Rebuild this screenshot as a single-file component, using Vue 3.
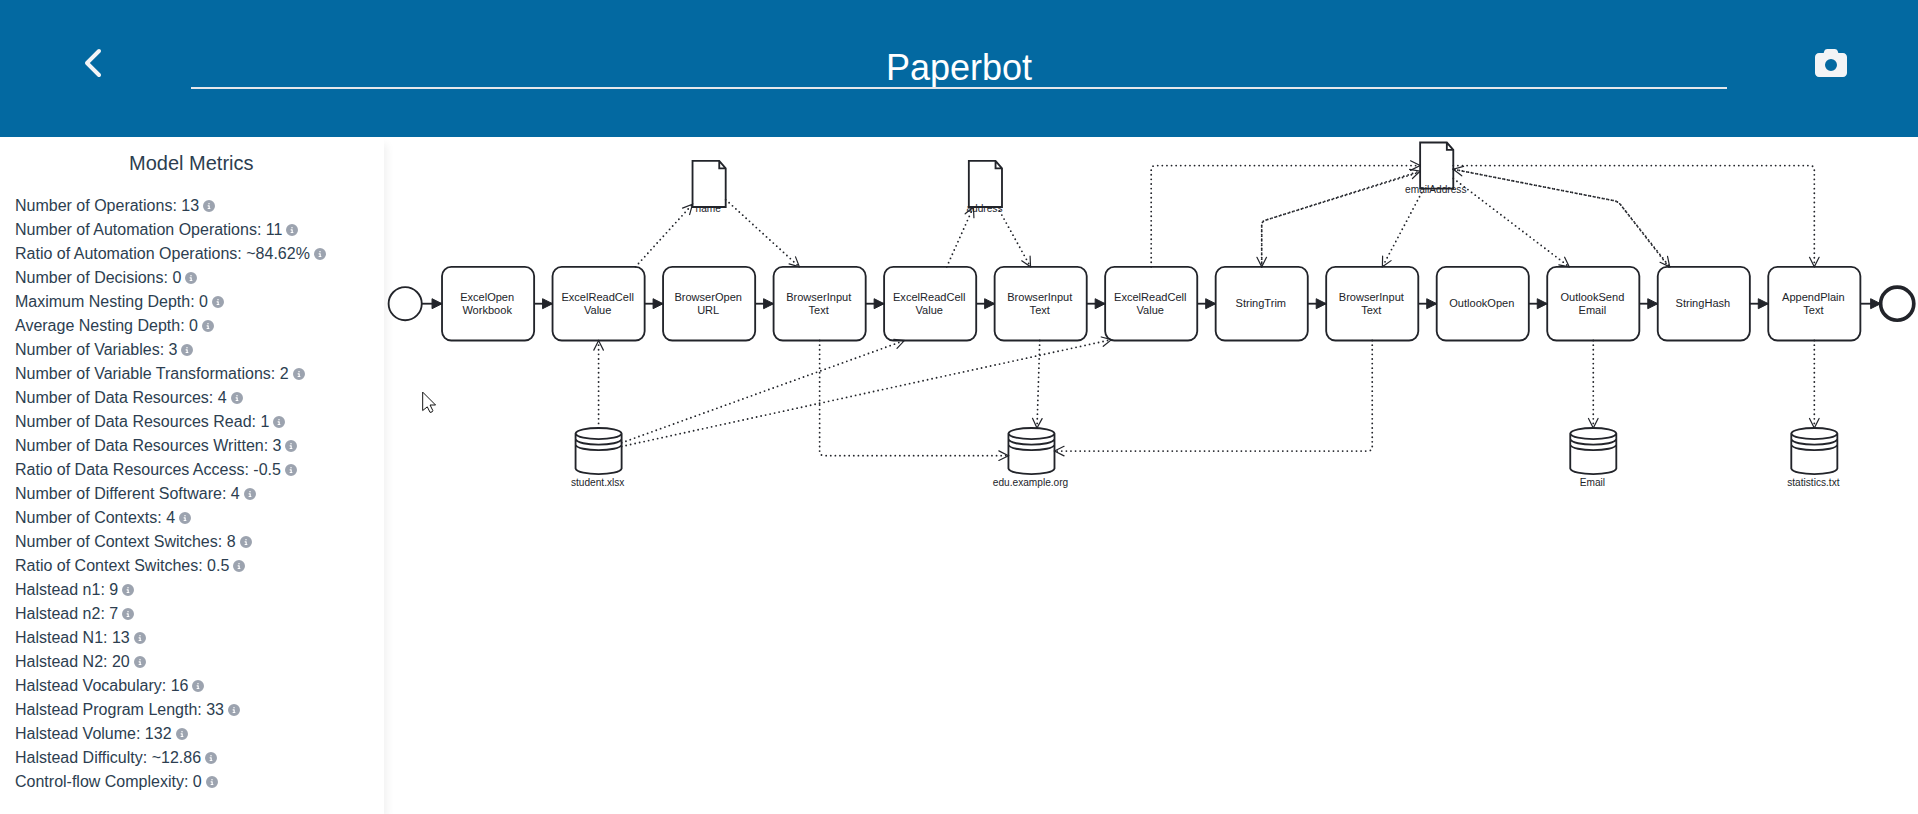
<script setup>
import { ref } from 'vue'

const modelName = ref('Paperbot')

const metrics = [
  ['Number of Operations', '13'],
  ['Number of Automation Operations', '11'],
  ['Ratio of Automation Operations', '~84.62%'],
  ['Number of Decisions', '0'],
  ['Maximum Nesting Depth', '0'],
  ['Average Nesting Depth', '0'],
  ['Number of Variables', '3'],
  ['Number of Variable Transformations', '2'],
  ['Number of Data Resources', '4'],
  ['Number of Data Resources Read', '1'],
  ['Number of Data Resources Written', '3'],
  ['Ratio of Data Resources Access', '-0.5'],
  ['Number of Different Software', '4'],
  ['Number of Contexts', '4'],
  ['Number of Context Switches', '8'],
  ['Ratio of Context Switches', '0.5'],
  ['Halstead n1', '9'],
  ['Halstead n2', '7'],
  ['Halstead N1', '13'],
  ['Halstead N2', '20'],
  ['Halstead Vocabulary', '16'],
  ['Halstead Program Length', '33'],
  ['Halstead Volume', '132'],
  ['Halstead Difficulty', '~12.86'],
  ['Control-flow Complexity', '0'],
]

const tasks = [
  ['ExcelOpen', 'Workbook'],
  ['ExcelReadCell', 'Value'],
  ['BrowserOpen', 'URL'],
  ['BrowserInput', 'Text'],
  ['ExcelReadCell', 'Value'],
  ['BrowserInput', 'Text'],
  ['ExcelReadCell', 'Value'],
  ['StringTrim'],
  ['BrowserInput', 'Text'],
  ['OutlookOpen'],
  ['OutlookSend', 'Email'],
  ['StringHash'],
  ['AppendPlain', 'Text'],
].map((lines, i) => ({ lines, x: 63 + i * 120 }))

const flows = [
  'M41 181H63',
  ...tasks.map((t) => `M${t.x + 100} 181h${t.x === 1503 ? 22 : 20}`),
]

const variables = [
  { name: 'name', x: 335, y: 26 },
  { name: 'address', x: 635, y: 26 },
  { name: 'emailAddress', x: 1125, y: 6 },
]

const stores = [
  { name: 'student.xlsx', x: 208 },
  { name: 'edu.example.org', x: 678 },
  { name: 'Email', x: 1288 },
  { name: 'statistics.txt', x: 1528 },
]

const associations = [
  'M273 141L335 73',
  'M371 68L451 141',
  'M611 141L640 76',
  'M666 76L702 141',
  'M233 316V221',
  'M258 332L565 221',
  'M258 336L790 220',
  'M473 221V341Q473 346 478 346H678',
  'M712 221L709 316',
  'M1073 221V336Q1073 341 1068 341H728',
  'M833 141V36Q833 31 838 31H1125',
  'M953 141V96Q953 91 958 90L1125 37',
  'M1125 38L958 90Q953 91 953 96V141',
  'M1129 56L1084 141',
  'M1161 45L1287 141',
  'M1161 35L1335 69Q1340 70 1343 74L1396 141',
  'M1395 141L1343 74Q1340 70 1335 69L1161 35',
  'M1161 31H1548Q1553 31 1553 36V141',
  'M1313 221V316',
  'M1553 221V316',
]
</script>

<template>
  <div class="page">
    <header class="top">
      <div class="side back">
        <button type="button" aria-label="Back">
          <svg width="16" height="32" viewBox="0 0 256 512"><path d="M9.4 233.4c-12.5 12.5-12.5 32.8 0 45.3l192 192c12.5 12.5 32.8 12.5 45.3 0s12.5-32.8 0-45.3L77.3 256 246.6 86.6c12.5-12.5 12.5-32.8 0-45.3s-32.8-12.5-45.3 0l-192 192z" /></svg>
        </button>
      </div>
      <input v-model="modelName" class="title" type="text" aria-label="Model name" />
      <div class="side shot">
        <button type="button" aria-label="Save image">
          <svg width="32" height="32" viewBox="0 0 512 512"><path d="M149.1 64.8L138.7 96H64C28.7 96 0 124.7 0 160V416c0 35.3 28.7 64 64 64H448c35.3 0 64-28.7 64-64V160c0-35.3-28.7-64-64-64H373.3L362.9 64.8C356.4 45.2 338.1 32 317.4 32H194.6c-20.7 0-39 13.2-45.5 32.8zM256 192a96 96 0 1 1 0 192 96 96 0 1 1 0-192z" /></svg>
        </button>
      </div>
    </header>

    <main class="body">
      <aside class="metrics">
        <h2>Model Metrics</h2>
        <ul>
          <li v-for="[label, value] in metrics" :key="label">
            <span>{{ label }}: {{ value }}</span>
            <svg class="info" width="12" height="12" viewBox="0 0 512 512"><path d="M256 512A256 256 0 1 0 256 0a256 256 0 1 0 0 512zM216 336h24V272H216c-13.3 0-24-10.7-24-24s10.7-24 24-24h48c13.3 0 24 10.7 24 24v88h8c13.3 0 24 10.7 24 24s-10.7 24-24 24H216c-13.3 0-24-10.7-24-24s10.7-24 24-24zm40-208a32 32 0 1 1 0 64 32 32 0 1 1 0-64z" /></svg>
          </li>
        </ul>
      </aside>

      <section class="canvas">
        <svg class="diagram" viewBox="0 0 1666 700" preserveAspectRatio="xMinYMin meet">
          <defs>
            <marker id="flow-end" markerUnits="userSpaceOnUse" viewBox="0 0 12 12" markerWidth="13" markerHeight="13" refX="11" refY="6" orient="auto">
              <path d="M1 1L11 6L1 11Z" class="head" />
            </marker>
            <marker id="assoc-end" markerUnits="userSpaceOnUse" viewBox="0 0 10 10" markerWidth="13" markerHeight="13" refX="9" refY="5" orient="auto">
              <path d="M1 1L9 5L1 9" class="open-head" />
            </marker>
          </defs>

          <circle class="shape" cx="23" cy="181" r="18" />
          <circle class="shape end" cx="1643" cy="181" r="18" />

          <g v-for="t in tasks" :key="t.x">
            <rect class="shape" :x="t.x" y="141" width="100" height="80" rx="10" />
            <text
              v-for="(line, n) in t.lines"
              :key="line"
              class="task-label"
              :x="t.x + 49"
              :y="(t.lines.length === 1 ? 185 : 178) + n * 14"
            >{{ line }}</text>
          </g>

          <path v-for="d in flows" :key="d" :d="d" class="flow" marker-end="url(#flow-end)" />

          <g v-for="v in variables" :key="v.name">
            <path class="shape" :d="`M${v.x} ${v.y}h29l7 8v42h-36zm29 0v8h7`" />
            <text class="label" :x="v.x + 17" :y="v.y + 55">{{ v.name }}</text>
          </g>

          <g v-for="s in stores" :key="s.name">
            <path
              class="shape"
              :d="`M${s.x} 322v38c2 8 48 8 50 0v-38c-2-8-48-8-50 0c2 8 48 8 50 0m-50 6c2 8 48 8 50 0m-50 6c2 8 48 8 50 0`"
            />
            <text class="label" :x="s.x + 24" y="379">{{ s.name }}</text>
          </g>

          <path v-for="d in associations" :key="d" :d="d" class="assoc" marker-end="url(#assoc-end)" />

          <path class="pointer" d="M42 277V297L47 293L50 299Q53 299 53 297L50 291H56Z" />
        </svg>
      </section>
    </main>
  </div>
</template>

<style>
body {
  margin: 0;
  background: #fff;
}
</style>

<style scoped>
.page {
  display: flex;
  flex-direction: column;
  min-height: 100vh;
  font-family: "Liberation Sans", Arial, sans-serif;
  color: #2c3e50;
}

.top {
  display: flex;
  align-items: flex-start;
  padding: 48px 0;
  background: #0369a1;
}

.side {
  display: flex;
  flex: 0 0 191px;
  box-sizing: border-box;
}

.back {
  padding-left: 85px;
}

.shot {
  justify-content: flex-end;
  padding-right: 71px;
}

.side button {
  display: flex;
  align-items: center;
  height: 30px;
  padding: 0;
  border: 0;
  background: none;
  color: #f3f4f6;
  cursor: pointer;
}

svg {
  display: block;
}

.side path,
.info path {
  fill: currentColor;
}

.title {
  flex: 1;
  box-sizing: border-box;
  min-width: 0;
  height: 41px;
  padding: 0;
  border: 0;
  border-bottom: 2px solid #e5e7eb;
  border-radius: 0;
  outline: 0;
  background: transparent;
  color: #fff;
  font: inherit;
  font-size: 36px;
  line-height: 40px;
  text-align: center;
}

.body {
  display: flex;
  flex: 1;
}

.metrics {
  position: relative;
  z-index: 1;
  flex: 0 0 20%;
  box-sizing: border-box;
  padding: 12px 16px 20px 15px;
  background: #fff;
  box-shadow: 4px 6px 8px -1px rgba(0, 0, 0, 0.06);
  clip-path: inset(0 -20px 0 0);
}

h2 {
  margin: 0 0 17px;
  font-size: 20px;
  font-weight: 400;
  line-height: 28px;
  text-align: center;
}

ul {
  margin: 0;
  padding: 0;
  list-style: none;
}

li {
  display: flex;
  align-items: center;
  gap: 4px;
  font-size: 16px;
  line-height: 24px;
}

.info {
  flex: none;
  color: #9ca3af;
}

.canvas {
  flex: 1;
  min-width: 0;
}

.diagram {
  width: 100%;
}

.shape {
  fill: #fff;
  stroke: #22242a;
  stroke-width: 2px;
}

.end {
  stroke-width: 4px;
}

.flow {
  fill: none;
  stroke: #22242a;
  stroke-width: 2px;
}

.head {
  fill: #22242a;
  stroke: #22242a;
  stroke-width: 1px;
}

.assoc {
  fill: none;
  stroke: #22242a;
  stroke-width: 2px;
  stroke-dasharray: 0 5;
  stroke-linecap: round;
}

.open-head {
  fill: none;
  stroke: #22242a;
  stroke-width: 1px;
  stroke-linecap: round;
}

.task-label,
.label {
  fill: #22242a;
  text-anchor: middle;
}

.task-label {
  font-size: 12px;
}

.label {
  font-size: 11px;
}

.pointer {
  fill: #fff;
  stroke: #000;
  stroke-width: 1px;
}
</style>
